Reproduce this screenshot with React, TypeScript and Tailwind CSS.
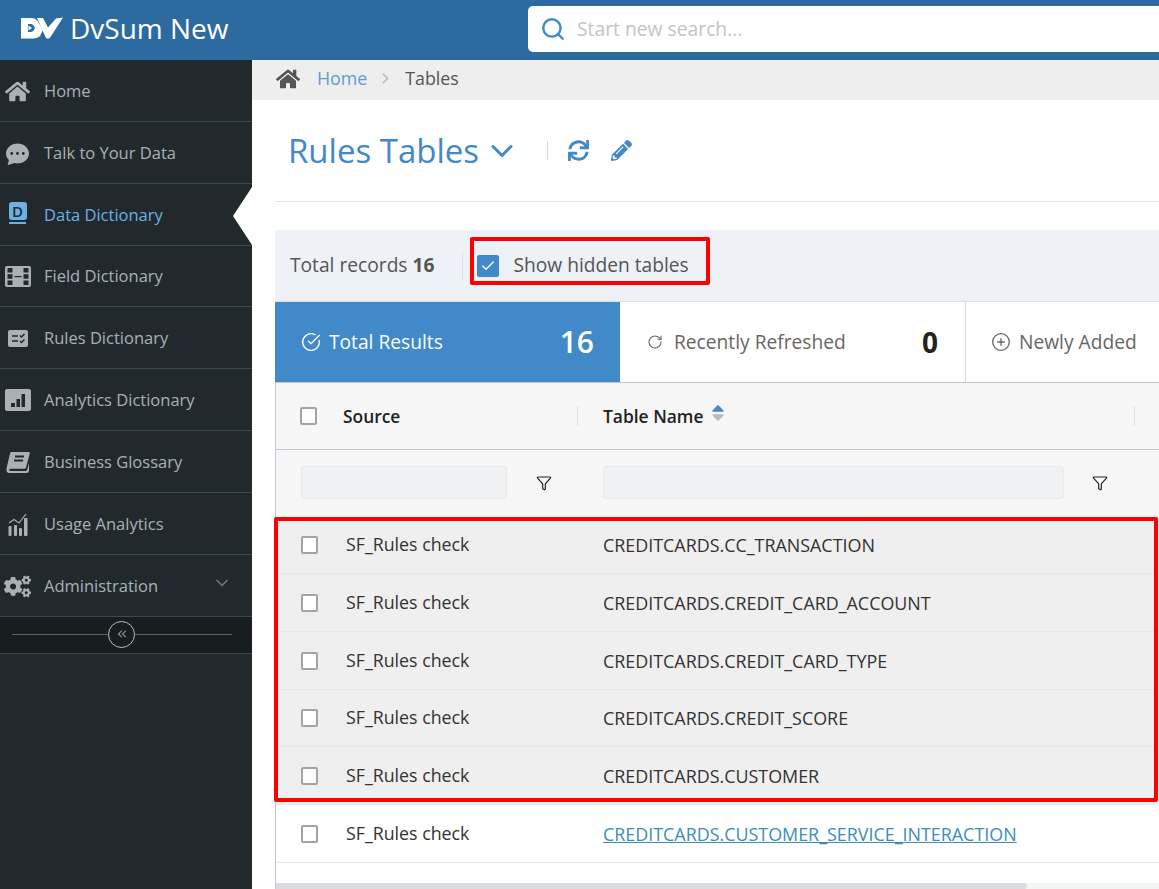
import { Check, ChevronDown, ChevronRight, ChevronsLeft, CircleCheckBig, CirclePlus, Funnel, RotateCw, Search } from 'lucide-react'
import type { ReactNode } from 'react'
import { FaCogs, FaHome, FaPencilAlt, FaSortDown, FaSortUp, FaSync } from 'react-icons/fa'
import { BsChatDotsFill } from 'react-icons/bs'

function Logo() {
  return (
    <svg width="42" height="22" viewBox="0 0 42 22" className="shrink-0">
      <path d="M0 1h10c3 0 5 1 6.500 3l5.500 9-3 6c-1.500 1.600-4 2.500-7 2.500H0z" fill="#fff" />
      <path d="M7 7h2.500c1.500 0 2.500.7 3.200 1.700l1.300 2.300-1.300 2.300C12 14.300 11 15 9.500 15H7z" fill="#2d6a9f" />
      <path d="M7.500 8.500l3.500 2.500-3.500 2.500z" fill="#fff" />
      <path d="M16 1h6l5 9.500L35 1.500l7-1L29.500 20c-1.500 2.200-3.800 2.200-5 0z" fill="#fff" />
    </svg>
  )
}

function DataDictIcon() {
  return (
    <span className="relative flex h-[22px] w-[19px] -translate-y-[2px] items-start justify-center">
      <span className="flex h-[18px] w-[18px] items-center justify-center rounded-[3px] bg-[#6cb0e6] font-['Open_Sans'] text-[15px] font-semibold leading-none text-[#22292d]">
        D
      </span>
      <span className="absolute bottom-0 left-[1px] h-[2px] w-[17px] bg-[#6cb0e6]" />
    </span>
  )
}

function FilmIcon() {
  return (
    <svg width="26" height="21" viewBox="0 0 26 21">
      <rect width="26" height="21" rx="2" fill="#a9b1b7" />
      <path d="M2.500 2h5v4.500h-5zM2.500 8.300h5v4.500h-5zM2.500 14.500h5V19h-5zM18.500 2h5v4.500h-5zM18.500 8.300h5v4.500h-5zM18.500 14.500h5V19h-5z" fill="#22292d" />
      <rect x="9.500" y="10" width="7" height="1.200" fill="#22292d" />
    </svg>
  )
}

function RulesIcon() {
  return (
    <svg width="20" height="17" viewBox="0 0 20 17">
      <rect width="20" height="17" rx="2" fill="#a9b1b7" />
      <path d="M4 6h6M4 11h6M12 5.500l1.500 1.500L16.500 4M12 11l1.500 1.500 3-3" stroke="#22292d" strokeWidth="1.500" fill="none" />
    </svg>
  )
}

function AnalyticsIcon() {
  return (
    <svg width="26" height="22" viewBox="0 0 26 22">
      <rect width="26" height="22" rx="2" fill="#a9b1b7" />
      <rect x="6" y="14" width="4" height="4" fill="#22292d" />
      <rect x="11.500" y="10" width="3.500" height="8" fill="#22292d" />
      <rect x="16.500" y="5" width="3.500" height="13" fill="#22292d" />
    </svg>
  )
}

function BookIcon() {
  return (
    <svg width="24" height="21" viewBox="0 0 24 21" fill="#a9b1b7">
      <path d="M5.500 0H22.500c1 0 1.500.7 1.300 1.500L20 15.500c-.2.8-.8 1.300-1.600 1.300H4.500c-1.800 0-1.800 2.200 0 2.200h15.500c.5 0 .9-.4 1-.8l2-7.200v7.500c0 1-1 2.500-2.500 2.500H3.500C1 21 0 19 .5 16.500L4 1.500C4.200.6 4.700 0 5.500 0z" />
      <path d="M9 4.500h9M8 8.500h9" stroke="#22292d" strokeWidth="1.800" fill="none" />
    </svg>
  )
}

function UsageIcon() {
  return (
    <svg width="20" height="23" viewBox="0 0 20 23" fill="#a9b1b7">
      <rect x="0.500" y="13" width="3" height="10" rx="1" />
      <rect x="6" y="12" width="3" height="11" rx="1" />
      <rect x="11" y="15" width="3" height="8" rx="1" />
      <rect x="16" y="5" width="3.500" height="18" rx="1" />
      <path d="M1 10l5-3.500 5 3.500 7-9" stroke="#a9b1b7" strokeWidth="1.200" fill="none" />
    </svg>
  )
}

const navItems: { label: string; icon: ReactNode; h: string; active?: boolean; chevron?: boolean }[] = [
  { label: 'Home', icon: <FaHome size={25} />, h: 'h-[62px] pt-[1px]' },
  { label: 'Talk to Your Data', icon: <BsChatDotsFill size={23} />, h: 'h-[62px] pt-[1px]' },
  { label: 'Data Dictionary', icon: <DataDictIcon />, h: 'h-[62px] pt-[1px]', active: true },
  { label: 'Field Dictionary', icon: <FilmIcon />, h: 'h-[61px]' },
  { label: 'Rules Dictionary', icon: <RulesIcon />, h: 'h-[62px] pt-[1px]' },
  { label: 'Analytics Dictionary', icon: <AnalyticsIcon />, h: 'h-[62px] pt-[1px]' },
  { label: 'Business Glossary', icon: <BookIcon />, h: 'h-[62px] pt-[1px]' },
  { label: 'Usage Analytics', icon: <UsageIcon />, h: 'h-[62px] pt-[1px]' },
  { label: 'Administration', icon: <FaCogs size={27} />, h: 'h-[62px] pt-[1px]', chevron: true },
]

const rows = [
  { name: 'CREDITCARDS.CC_TRANSACTION', h: 'h-[57px]' },
  { name: 'CREDITCARDS.CREDIT_CARD_ACCOUNT', h: 'h-[58px]' },
  { name: 'CREDITCARDS.CREDIT_CARD_TYPE', h: 'h-[58px]' },
  { name: 'CREDITCARDS.CREDIT_SCORE', h: 'h-[57px]' },
  { name: 'CREDITCARDS.CUSTOMER', h: 'h-[58px]' },
]

function Box() {
  return <span className="block h-[18px] w-[17px] shrink-0 rounded-[2px] border-2 border-[#a3a3a3] bg-white" />
}

function Row({ name, link, h }: { name: string; link?: boolean; h: string }) {
  return (
    <div className={`flex ${h} items-center border-b border-[#e6e8ee] pl-[25px] text-[#333]`}>
      <Box />
      <span className="ml-[28px] w-[257px] -translate-y-px pt-px text-[17.8px]">SF_Rules check</span>
      {link ? (
        <a className="pt-px text-[17.9px] text-[#3c8dbc] underline">{name}</a>
      ) : (
        <span className="pt-px text-[17.9px]">{name}</span>
      )}
    </div>
  )
}

export default function App() {
  return (
    <div className="flex h-[889px] w-[1159px] flex-col overflow-hidden bg-white font-['Open_Sans',sans-serif]">
      <header className="flex h-[60px] shrink-0 items-center bg-[#2d6a9f]">
        <div className="flex w-[528px] items-center pb-[5px] pl-[21px]">
          <Logo />
          <span className="ml-[7px] text-[28px] leading-none text-white">DvSum New</span>
        </div>
        <div className="flex h-[46px] flex-1 -translate-y-px items-center rounded-l-[5px] bg-white pl-[12px]">
          <Search size={26} strokeWidth={2.2} className="text-[#4189c8]" />
          <span className="ml-[11px] text-[19.3px] text-[#c4c4c4]">Start new search...</span>
        </div>
      </header>

      <div className="flex min-h-0 flex-1">
        <aside className="w-[252px] shrink-0 bg-[#22292d]">
          {navItems.map((item) => (
            <div
              key={item.label}
              className={`relative flex ${item.h} items-center border-b border-[#3f484d] text-[16.5px] ${
                item.active ? 'text-[#6cb0e6]' : 'text-[#a9b1b7]'
              }`}
            >
              <span className="flex w-[34px] justify-center pl-[1px]">{item.icon}</span>
              <span className="ml-[10px]">{item.label}</span>
              {item.chevron && <ChevronDown size={20} className="absolute left-[212px] top-[18px] text-[#6f777c]" />}
              {item.active && (
                <span className="absolute right-0 top-[3px] h-0 w-0 border-y-[29px] border-r-[19px] border-y-transparent border-r-white" />
              )}
            </div>
          ))}
          <div className="flex h-[37px] items-center border-b border-[#3f484d] bg-[#181d20] pb-[2px] pl-3">
            <span className="h-px w-[96px] bg-[#5d6468]" />
            <span className="flex h-[27px] w-[27px] items-center justify-center rounded-full border border-[#b9bdbf]">
              <ChevronsLeft size={14} className="text-[#8a9094]" />
            </span>
            <span className="h-px w-[97px] bg-[#5d6468]" />
          </div>
        </aside>

        <main className="min-w-0 flex-1">
          <div className="flex h-10 items-center bg-[#eeeeee] pb-[3px] pl-[24px] text-[17.8px]">
            <FaHome size={24} className="text-[#555]" />
            <span className="ml-[17px] text-[#5a9fd4]">Home</span>
            <ChevronRight size={17} className="ml-[10px] text-[#b5b5b5]" />
            <span className="ml-[11px] text-[#555]">Tables</span>
          </div>

          <div className="ml-[23px]">
            <div className="flex h-[102px] items-center border-b border-[#e3e5e8] pl-[13px]">
              <h1 className="text-[33px] leading-none text-[#4189c8]">Rules Tables</h1>
              <ChevronDown size={36} strokeWidth={2} className="ml-[5px] text-[#4189c8]" />
              <span className="ml-[27px] h-[19px] w-px bg-[#d9d9d9]" />
              <FaSync size={21} className="ml-[20px] text-[#4189c8]" />
              <FaPencilAlt size={21} className="ml-[22px] text-[#4189c8]" />
            </div>

            <div className="relative mt-[28px]">
              <div className="flex h-[72px] items-center border-b border-[#dcdfe6] bg-[#eef1f6] pl-[15px] text-[19.2px] text-[#555]">
                <span>
                  Total records <b className="font-bold">16</b>
                </span>
                <span className="ml-[28px] h-[27px] w-px bg-[#dcdfe6]" />
                <span className="ml-[14px] flex h-[22px] w-[22px] items-center justify-center rounded-[2px] bg-[#4189c8]">
                  <Check size={16} strokeWidth={2} className="text-white" />
                </span>
                <span className="ml-[14px]">Show hidden tables</span>
              </div>

              <div className="flex h-[81px] border-b border-[#c3c7d3] text-[19.2px] text-[#666]">
                <div className="flex w-[345px] items-center bg-[#4189c8] pl-[26px] pr-[26px] text-white">
                  <CircleCheckBig size={20} strokeWidth={1.6} />
                  <span className="ml-[8px] flex-1">Total Results</span>
                  <span className="text-[30px] font-semibold leading-none">16</span>
                </div>
                <div className="flex w-[346px] items-center border-r border-[#dcdfe6] pl-[27px] pr-[27px]">
                  <RotateCw size={16} strokeWidth={1.6} />
                  <span className="ml-[11px] flex-1">Recently Refreshed</span>
                  <span className="text-[28px] font-bold leading-none text-[#222]">0</span>
                </div>
                <div className="flex flex-1 items-center pl-[25px]">
                  <CirclePlus size={20} strokeWidth={1.6} />
                  <span className="ml-[8px] whitespace-nowrap">Newly Added</span>
                </div>
              </div>

              <div className="border-l border-[#c3c7d3]">
                <div className="flex h-[67px] items-center border-b border-[#c3c7d3] bg-[#f7f7f8] pl-[24px] text-[17.4px] font-semibold text-[#222]">
                  <Box />
                  <span className="ml-[26px] w-[234px]">Source</span>
                  <span className="h-5 w-px bg-[#dcdfe6]" />
                  <span className="ml-[25px]">Table Name</span>
                  <span className="relative ml-[5px] h-[20px] w-[16px] -translate-y-[3px]">
                    <FaSortUp size={20} className="absolute left-0 top-0 text-[#4189c8]" />
                    <FaSortDown size={20} className="absolute left-0 top-0 text-[#b5bac4]" />
                  </span>
                  <span className="ml-[410px] h-5 w-px bg-[#dcdfe6]" />
                </div>
                <div className="flex h-[67px] items-center bg-[#f7f7f8] pb-[2px] pl-[25px]">
                  <span className="h-[33px] w-[206px] rounded-[3px] border border-[#e6e8ec] bg-[#f0f1f3]" />
                  <Funnel size={16} strokeWidth={1.8} className="ml-[29px] text-[#222]" />
                  <span className="ml-[51px] h-[33px] w-[461px] rounded-[3px] border border-[#e6e8ec] bg-[#f0f1f3]" />
                  <Funnel size={16} strokeWidth={1.8} className="ml-[28px] text-[#222]" />
                </div>

                <div className="bg-[#efefef]">
                  {rows.map((r) => (
                    <Row key={r.name} name={r.name} h={r.h} />
                  ))}
                </div>
                <Row name="CREDITCARDS.CUSTOMER_SERVICE_INTERACTION" link h="h-[58px]" />
                <div className="mt-[20px] h-[6px] bg-[#f3f5f5]">
                  <div className="h-full w-[751px] rounded-r-[4px] bg-[#d9dbdf]" />
                </div>
              </div>

              <div className="pointer-events-none absolute left-[195px] top-[7px] h-[48px] w-[240px] rounded-[2px] border-4 border-[#ff0000]" />
              <div className="pointer-events-none absolute left-[-1px] top-[287px] h-[285px] w-[884px] rounded-[2px] border-4 border-[#ff0000]" />
            </div>
          </div>
        </main>
      </div>
    </div>
  )
}
